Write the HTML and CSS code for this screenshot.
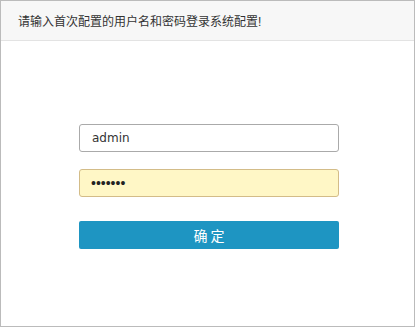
FILE: index.html
```html
<!DOCTYPE html>
<html lang="zh-CN">
<head>
    <meta charset="UTF-8">
    <meta name="viewport" content="width=device-width, initial-scale=1.0">
    <title>登录系统配置</title>
    <link rel="stylesheet" href="styles.css">
</head>
<body>
    <div class="panel">
        <div class="panel-head">请输入首次配置的用户名和密码登录系统配置!</div>
        <div class="panel-body">
            <form class="login-form">
                <input class="field" type="text" value="admin">
                <input class="field field-pass" type="password" value="1234567">
                <button class="btn" type="button">确 定</button>
            </form>
        </div>
    </div>
</body>
</html>
```

FILE: styles.css
```css
html, body {
    margin: 0;
    padding: 0;
    background: #fff;
}

body {
    font-family: Arial, "Liberation Sans", "Noto Sans CJK SC", sans-serif;
    font-size: 12px;
    color: #333;
}

.panel {
    width: 415px;
    height: 327px;
    box-sizing: border-box;
    border: 1px solid #bbb;
    background: #fff;
}

.panel-head {
    height: 40px;
    box-sizing: border-box;
    background: #f7f7f7;
    border-bottom: 1px solid #e3e3e3;
    padding: 12px 0 0 17px;
    line-height: 18px;
    color: #333;
}

.panel-body {
    padding-top: 83px;
}

.login-form {
    width: 260px;
    margin: 0 0 0 78px;
    display: flex;
    flex-direction: column;
}

.field {
    height: 28px;
    box-sizing: border-box;
    border: 1px solid #aaa;
    border-radius: 3px;
    padding: 0 12px;
    font-family: "DejaVu Sans", "Liberation Sans", sans-serif;
    font-size: 12px;
    color: #333;
    background: #fff;
    margin: 0 0 17px 0;
    outline: none;
}

.field-pass {
    background: #fff7c6;
    border-color: #d3bc88;
    margin-bottom: 24px;
    font-family: "Liberation Sans", sans-serif;
    font-size: 14px;
    color: #222;
    padding-left: 11px;
}

.btn {
    height: 28px;
    border: none;
    border-radius: 2px;
    background: #1e95c2;
    color: #fff;
    font-family: "Noto Sans CJK SC", sans-serif;
    font-size: 14px;
    cursor: pointer;
}
```
